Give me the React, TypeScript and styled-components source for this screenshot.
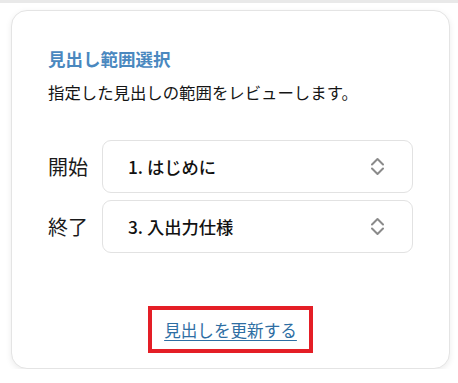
import React from "react";
import styled, { createGlobalStyle } from "styled-components";

const GlobalStyle = createGlobalStyle`
  html, body {
    margin: 0;
    padding: 0;
    background: #ffffff;
  }
  body {
    font-family: "Noto Sans CJK JP", "Noto Sans", sans-serif;
    color: #1a1a1a;
  }
`;

const TopStrip = styled.div`
  height: 3px;
  background: #e9e9e9;
`;

const Card = styled.div`
  box-sizing: border-box;
  width: 439px;
  height: 359px;
  margin: 7px 0 0 11px;
  padding: 35px 36px 15px;
  border: 1px solid #e4e4e4;
  border-radius: 16px;
  background: #fff;
  box-shadow: 0 2px 6px rgba(0, 0, 0, 0.08);
  display: flex;
  flex-direction: column;
`;

const Title = styled.h2`
  margin: 0;
  font-size: 17.5px;
  line-height: 26px;
  font-weight: 700;
  color: #4a88bf;
`;

const Desc = styled.p`
  margin: 8px 0 0;
  font-size: 16.4px;
  line-height: 24px;
  color: #151515;
`;

const Rows = styled.div`
  margin-top: 36px;
  display: flex;
  flex-direction: column;
  gap: 7px;
`;

const Row = styled.div`
  display: flex;
  align-items: center;
  gap: 14px;
`;

const Label = styled.span`
  width: 40px;
  flex: none;
  font-size: 20px;
  line-height: 28px;
  color: #1a1a1a;
`;

const Select = styled.div`
  box-sizing: border-box;
  flex: 1;
  height: 53px;
  border: 1px solid #e2e2e2;
  border-radius: 9px;
  padding: 0 28px 0 25px;
  display: flex;
  align-items: center;
  justify-content: space-between;
  font-size: 17.3px;
  font-weight: 500;
  color: #111;
`;

const Footer = styled.div`
  margin-top: auto;
  display: flex;
  justify-content: center;
`;

const Highlight = styled.div`
  box-sizing: border-box;
  width: 165px;
  height: 47px;
  border: 4px solid #e41e26;
  display: flex;
  align-items: center;
  justify-content: center;
`;

const UpdateLink = styled.a`
  font-size: 16.6px;
  line-height: 24px;
  color: #2e6ea3;
  text-decoration: underline;
  text-underline-offset: 3px;
  cursor: pointer;
`;

const Chevrons = () => (
  <svg width="13" height="19" viewBox="0 0 13 19" fill="none">
    <path d="M1 7.5 L6.5 2 L12 7.5" stroke="#8a8a8a" strokeWidth="2" strokeLinecap="round" strokeLinejoin="round" />
    <path d="M1 11.5 L6.5 17 L12 11.5" stroke="#8a8a8a" strokeWidth="2" strokeLinecap="round" strokeLinejoin="round" />
  </svg>
);

const ranges = [
  { label: "開始", value: "1. はじめに" },
  { label: "終了", value: "3. 入出力仕様" },
];

export default function App() {
  return (
    <>
      <GlobalStyle />
      <TopStrip />
      <Card>
        <Title>見出し範囲選択</Title>
        <Desc>指定した見出しの範囲をレビューします。</Desc>
        <Rows>
          {ranges.map((r) => (
            <Row key={r.label}>
              <Label>{r.label}</Label>
              <Select>
                <span>{r.value}</span>
                <Chevrons />
              </Select>
            </Row>
          ))}
        </Rows>
        <Footer>
          <Highlight>
            <UpdateLink>見出しを更新する</UpdateLink>
          </Highlight>
        </Footer>
      </Card>
    </>
  );
}
